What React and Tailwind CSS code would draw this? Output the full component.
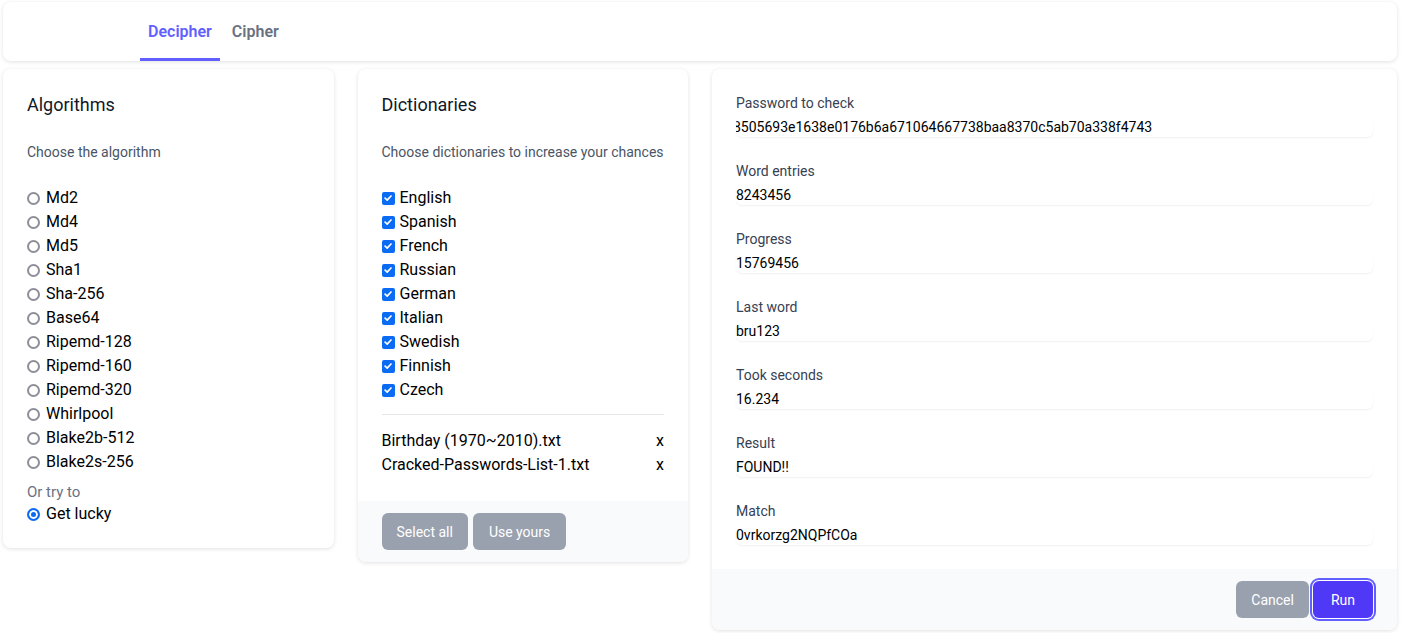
import { useState } from "react";

const algorithms = [
  "Md2",
  "Md4",
  "Md5",
  "Sha1",
  "Sha-256",
  "Base64",
  "Ripemd-128",
  "Ripemd-160",
  "Ripemd-320",
  "Whirlpool",
  "Blake2b-512",
  "Blake2s-256",
];

const languages = ["English", "Spanish", "French", "Russian", "German", "Italian", "Swedish", "Finnish", "Czech"];

const results = [
  { label: "Password to check", value: "8505693e1638e0176b6a671064667738baa8370c5ab70a338f4743", clip: true },
  { label: "Word entries", value: "8243456" },
  { label: "Progress", value: "15769456" },
  { label: "Last word", value: "bru123" },
  { label: "Took seconds", value: "16.234" },
  { label: "Result", value: "FOUND!!" },
  { label: "Match", value: "0vrkorzg2NQPfCOa" },
];

const card = "bg-white rounded-lg shadow-[0_1px_4px_rgba(0,0,0,0.12)]";

// radio drawn like chrome's native one
const Radio = ({ checked, onClick, children }) => (
  <label className="flex items-center h-6 text-base cursor-pointer" onClick={onClick}>
    <span
      className={`w-[13px] h-[13px] rounded-full mr-[6px] shrink-0 border-2 ${
        checked
          ? "border-[#0b6bf2] bg-[#0b6bf2] shadow-[inset_0_0_0_2px_white]"
          : "border-[#8e8e98] bg-white"
      }`}
    />
    {children}
  </label>
);

const Check = ({ checked, onClick, children }) => (
  <label className="flex items-center h-6 text-base cursor-pointer" onClick={onClick}>
    <span
      className={`w-[13px] h-[13px] rounded-[2px] mr-[5px] shrink-0 flex items-center justify-center ${
        checked ? "bg-[#0b6bf2]" : "border-2 border-[#8e8e98] bg-white"
      }`}
    >
      {checked && (
        <svg viewBox="0 0 12 12" className="w-[10px] h-[10px]" fill="none" stroke="white" strokeWidth="2" strokeLinecap="round" strokeLinejoin="round">
          <path d="M2.5 6.2 5 8.6 9.6 3.6" />
        </svg>
      )}
    </span>
    {children}
  </label>
);

const App = () => {
  const [tab, setTab] = useState("decipher");
  const [algo, setAlgo] = useState("lucky");
  const [dicts, setDicts] = useState(languages);
  const [files, setFiles] = useState(["Birthday (1970~2010).txt", "Cracked-Passwords-List-1.txt"]);

  const toggleDict = (name) => {
    setDicts(dicts.includes(name) ? dicts.filter((d) => d !== name) : [...dicts, name]);
  };

  return (
    <div className="min-h-screen bg-white pl-[3px] pr-[5px] pt-[2px] font-['Roboto',sans-serif] text-black">
      {/* tabs */}
      <div className={`${card} h-[59px] flex items-end pl-[137px] gap-1`}>
        {[
          ["decipher", "Decipher"],
          ["cipher", "Cipher"],
        ].map(([key, name]) => (
          <button
            key={key}
            onClick={() => setTab(key)}
            className={`h-full px-2 pt-[4px] text-base font-semibold border-b-[3px] ${
              tab === key ? "text-indigo-500 border-indigo-500" : "text-gray-500 border-transparent"
            }`}
          >
            {name}
          </button>
        ))}
      </div>

      <div className="grid grid-cols-4 gap-6 mt-2 items-start">
        {/* algorithms */}
        <div className={`${card} px-6 pt-[22px] pb-[22px]`}>
          <h3 className="text-lg leading-7 text-gray-900">Algorithms</h3>
          <p className="mt-[23px] text-sm leading-5 text-gray-600">Choose the algorithm</p>
          <div className="mt-6">
            {algorithms.map((a) => (
              <Radio key={a} checked={algo === a} onClick={() => setAlgo(a)}>
                {a}
              </Radio>
            ))}
          </div>
          <p className="mt-[8px] text-[15px] leading-5 text-gray-500">Or try to</p>
          <Radio checked={algo === "lucky"} onClick={() => setAlgo("lucky")}>
            Get lucky
          </Radio>
        </div>

        {/* dictionaries */}
        <div className={`${card} overflow-hidden`}>
          <div className="px-6 pt-[22px] pb-6">
            <h3 className="text-lg leading-7 text-gray-900">Dictionaries</h3>
            <p className="mt-[23px] text-sm leading-5 text-gray-600">Choose dictionaries to increase your chances</p>
            <div className="mt-6">
              {languages.map((l) => (
                <Check key={l} checked={dicts.includes(l)} onClick={() => toggleDict(l)}>
                  {l}
                </Check>
              ))}
            </div>
            <div className="mt-3 border-t border-gray-200" />
            <ul className="mt-[14px]">
              {files.map((f) => (
                <li key={f} className="flex justify-between items-center h-6 text-base">
                  <span>{f}</span>
                  <button onClick={() => setFiles(files.filter((x) => x !== f))}>x</button>
                </li>
              ))}
            </ul>
          </div>
          <div className="bg-gray-50 px-6 py-3 flex gap-[5px]">
            <button className="h-[37px] px-[15px] rounded-md bg-gray-400 text-white text-sm" onClick={() => setDicts(languages)}>
              Select all
            </button>
            <button className="h-[37px] px-4 rounded-md bg-gray-400 text-white text-sm">Use yours</button>
          </div>
        </div>

        {/* results */}
        <div className={`${card} col-span-2 overflow-hidden`}>
          <div className="p-6 flex flex-col gap-6">
            {results.map((r) => (
              <div key={r.label}>
                <div className="text-sm leading-5 text-gray-700">{r.label}</div>
                <div className="mt-1 h-5 rounded-md shadow-[0_1px_2px_rgba(0,0,0,0.06)] overflow-hidden whitespace-nowrap text-sm leading-5">
                  <span className={r.clip ? "-ml-[3px]" : ""}>{r.value}</span>
                </div>
              </div>
            ))}
          </div>
          <div className="bg-gray-50 px-6 py-3 flex justify-end gap-1">
            <button className="h-[37px] px-[15px] rounded-md bg-gray-400 text-white text-sm">Cancel</button>
            <button className="h-[37px] px-[18px] rounded-md bg-indigo-600 text-white text-sm ring-2 ring-indigo-500 ring-offset-1">
              Run
            </button>
          </div>
        </div>
      </div>
    </div>
  );
};

export default App;
